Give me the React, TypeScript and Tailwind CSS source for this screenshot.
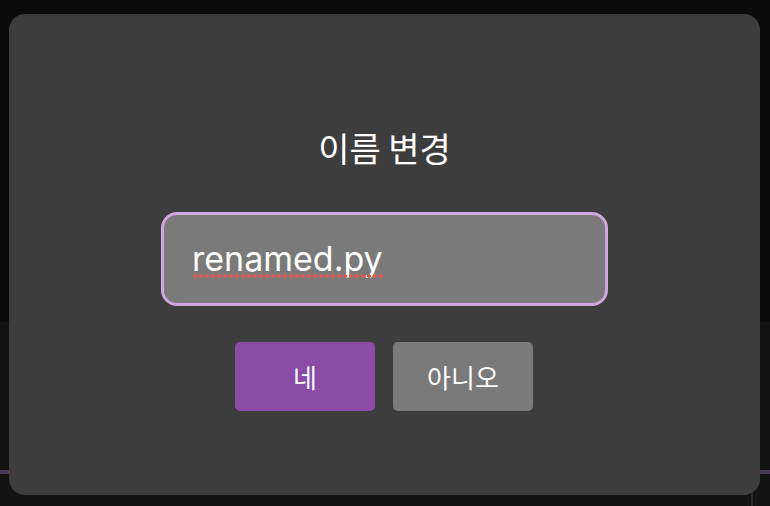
import React from "react";

export default function App() {
  const font = { fontFamily: 'Inter, "Noto Sans CJK KR", sans-serif' };
  return (
    <div className="relative w-[770px] h-[506px] overflow-hidden bg-[#0b0b0b]" style={font}>
      <div className="flex flex-col h-full">
        <div className="h-[322px] bg-[#0b0b0b]" />
        <div className="flex-1 bg-[#131313] flex flex-col">
          <div className="h-[148px]" />
          <div className="h-[4px] bg-[#4a3c56]" />
          <div className="flex-1 flex">
            <div className="w-[751px]" />
            <div className="w-[2px] bg-[#2a2a2a]" />
          </div>
        </div>
      </div>

      <div className="absolute left-[9px] top-[14px] w-[751px] h-[481px] rounded-[16px] bg-[#3d3d3d] flex flex-col items-center">
        <div className="mt-[112px] h-[44px] text-[34px] leading-[44px] text-white" style={{ fontFamily: '"Noto Sans CJK KR", sans-serif' }}>
          이름 변경
        </div>
        <div className="mt-[42px] w-[447px] h-[94px] rounded-[16px] border-[3px] border-[#cfa6df] bg-[#7a7a7a] flex items-center pl-[28px]">
          <span className="relative text-[34px] text-white leading-none" style={{ fontFamily: "Inter, sans-serif" }}>
            renamed.py
            <span className="absolute left-0 right-0 top-[32px] h-[4px] bg-[radial-gradient(circle,#e8554c_1.7px,transparent_2.1px)] bg-[length:6px_4px]" />
          </span>
        </div>
        <div className="mt-[36px] flex gap-[18px] -ml-[1px]">
          <button className="w-[140px] h-[69px] rounded-[5px] bg-[#8b4ca8] text-white text-[26px] flex items-center justify-center" style={{ fontFamily: '"Noto Sans CJK KR", sans-serif' }}>
            네
          </button>
          <button className="w-[140px] h-[69px] rounded-[5px] bg-[#7a7a7a] text-white text-[26px] flex items-center justify-center" style={{ fontFamily: '"Noto Sans CJK KR", sans-serif' }}>
            아니오
          </button>
        </div>
      </div>
    </div>
  );
}
